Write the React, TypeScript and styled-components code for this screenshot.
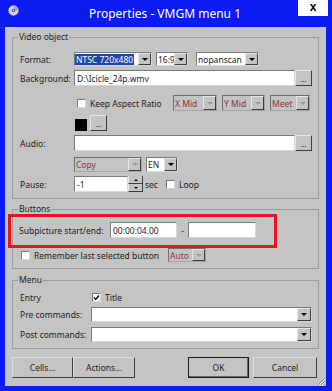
import * as React from 'react';
import styled, { createGlobalStyle, css } from 'styled-components';

const GlobalStyle = createGlobalStyle`
    html, body {
        margin: 0;
        padding: 0;
        background: #ffffff;
    }
    body {
        font-family: "Noto Sans", "DejaVu Sans", sans-serif;
        font-size: 8.5px;
        color: #1c1c1c;
    }
`;

const GREY = '#c4c4c4';

const Window = styled.div`
    width: 332px;
    height: 391px;
    box-sizing: border-box;
    background: #0a1cf2;
    display: flex;
    flex-direction: column;
    padding: 0 6px 5px 5px;
`;

const TitleBar = styled.div`
    height: 27px;
    margin: 0 -4px 0 -5px;
    display: grid;
    grid-template-columns: 1fr auto 1fr;
`;

const TitleIcon = styled.svg`
    margin: 5px 0 0 8px;
`;

const TitleText = styled.div`
    font-size: 12px;
    color: #ffffff;
    line-height: 27px;
`;

const CloseButton = styled.div`
    justify-self: end;
    width: 30px;
    height: 16px;
    margin-right: 2px;
    background: #ffffff;
    color: #000;
    font-family: "Liberation Sans", Arial, sans-serif;
    font-weight: 700;
    font-size: 12px;
    line-height: 14px;
    text-align: center;
`;

const Body = styled.div`
    position: relative;
    flex: 1;
    background: ${GREY};
    padding: 4px 7px 0 7px;
`;

const Group = styled.fieldset<{ $mt?: number; $pt: number }>`
    margin: ${p => p.$mt || 0}px 0 0 0;
    padding: ${p => p.$pt}px 6px 6px 7px;
    border: 1px solid #9c9c9c;
    min-width: 0;
`;

const Legend = styled.legend`
    padding: 0 1px;
    margin-left: -2px;
    line-height: 12px;
`;

const Row = styled.div<{ $mt?: number; $h: number; $cols?: string }>`
    display: grid;
    grid-template-columns: ${p => p.$cols || '54px 1fr'};
    align-items: center;
    height: ${p => p.$h}px;
    margin-top: ${p => p.$mt || 0}px;
`;

const Controls = styled.div<{ $gap?: number }>`
    display: flex;
    align-items: center;
    height: 100%;
    gap: ${p => p.$gap || 0}px;
`;

const Label = styled.span`
    white-space: nowrap;
`;

const sunken = css`
    box-sizing: border-box;
    border: 1px solid #d8d8d8;
    border-top-color: #7a7a7a;
    border-left-color: #7a7a7a;
`;

const TextBox = styled.div<{ $w?: number; $grow?: boolean }>`
    ${sunken};
    height: 100%;
    width: ${p => (p.$w ? `${p.$w}px` : 'auto')};
    flex: ${p => (p.$grow ? 1 : 'none')};
    background: #ffffff;
    padding-left: 2px;
    display: flex;
    align-items: center;
    white-space: nowrap;
`;

const SmallButton = styled.div<{ $w: number }>`
    box-sizing: border-box;
    width: ${p => p.$w}px;
    height: 100%;
    border-right: 1px solid #3c3c3c;
    border-bottom: 1px solid #3c3c3c;
    border-top: 1px solid #e6e6e6;
    border-left: 1px solid #e6e6e6;
    display: flex;
    align-items: center;
    justify-content: center;
    font-size: 7px;
    line-height: 1;
    padding-top: 2px;
`;

const SelectBox = styled.div<{ $w: number; $disabled?: boolean }>`
    ${sunken};
    width: ${p => p.$w}px;
    height: 100%;
    display: flex;
    background: ${p => (p.$disabled ? GREY : '#ffffff')};
    ${p => p.$disabled && css`
        border-color: #a6a6a6;
        border-top-color: #6e6e6e;
        border-left-color: #6e6e6e;
    `}
`;

const SelectText = styled.div<{ $disabled?: boolean; $selected?: boolean }>`
    flex: 1;
    display: flex;
    align-items: center;
    white-space: nowrap;
    overflow: hidden;
    color: ${p => (p.$disabled ? '#8a3434' : '#1c1c1c')};
    span {
        padding: 0 1px;
        ${p => p.$selected && css`
            background: #1f45b0;
            color: #ffffff;
        `}
    }
`;

const ArrowButton = styled.div<{ $disabled?: boolean; $w?: number }>`
    box-sizing: border-box;
    width: ${p => p.$w || 13}px;
    background: ${GREY};
    border-right: 1px solid #3c3c3c;
    border-bottom: 1px solid #3c3c3c;
    border-left: 1px solid #e6e6e6;
    border-top: 1px solid #e6e6e6;
    display: flex;
    align-items: center;
    justify-content: center;
    &::after {
        content: '';
        border-left: 3px solid transparent;
        border-right: 3px solid transparent;
        border-top: 3px solid ${p => (p.$disabled ? '#9a9a9a' : '#000000')};
    }
`;

const CheckBox = styled.div<{ $checked?: boolean; $ml?: number }>`
    ${sunken};
    width: 9px;
    height: 9px;
    margin-left: ${p => p.$ml || 0}px;
    background: #ffffff;
    display: flex;
    align-items: center;
    justify-content: center;
`;

const Swatch = styled.div`
    width: 12px;
    height: 12px;
    background: #000000;
    margin: 4px 3px 0 1px;
`;

const SpinButtons = styled.div`
    display: flex;
    flex-direction: column;
    width: 15px;
    height: 100%;
`;

const SpinHalf = styled.div<{ $up?: boolean }>`
    flex: 1;
    box-sizing: border-box;
    border-right: 1px solid #3c3c3c;
    border-bottom: 1px solid #3c3c3c;
    border-left: 1px solid #e6e6e6;
    display: flex;
    align-items: center;
    justify-content: center;
    &::after {
        content: '';
        border-left: 2px solid transparent;
        border-right: 2px solid transparent;
        ${p => (p.$up ? 'border-bottom: 2px solid #000;' : 'border-top: 2px solid #000;')}
    }
`;

const Highlight = styled.div`
    position: relative;
    &::after {
        content: '';
        position: absolute;
        left: -12px;
        top: -8px;
        width: 269px;
        bottom: -10px;
        border: 3px solid #e8141c;
        box-sizing: border-box;
        pointer-events: none;
    }
`;

const ButtonBar = styled.div`
    display: flex;
    height: 21px;
    margin-top: 8px;
    padding-right: 2px;
`;

const PushButton = styled.div<{ $w: number; $default?: boolean; $ml?: number }>`
    box-sizing: border-box;
    width: ${p => p.$w}px;
    margin-left: ${p => p.$ml || 0}px;
    height: 100%;
    display: flex;
    align-items: center;
    justify-content: center;
    border-right: 1px solid #3c3c3c;
    border-bottom: 1px solid #3c3c3c;
    border-top: 1px solid #dcdcdc;
    border-left: 1px solid #dcdcdc;
    ${p => p.$default && css`
        border: 1px solid #1a1a1a;
        box-shadow: inset -1px -1px 0 #6a6a6a;
    `}
`;

const Spacer = styled.div`
    flex: 1;
`;

const Grip = styled.svg`
    position: absolute;
    right: 0;
    bottom: 0;
`;

function Select(props: { w: number; text: string; disabled?: boolean; selected?: boolean }) {
    return (
        <SelectBox $w={props.w} $disabled={props.disabled}>
            <SelectText $disabled={props.disabled} $selected={props.selected}>
                <span>{props.text}</span>
            </SelectText>
            <ArrowButton $disabled={props.disabled} />
        </SelectBox>
    );
}

function Check(props: { checked?: boolean; ml?: number }) {
    return (
        <CheckBox $checked={props.checked} $ml={props.ml}>
            {props.checked && (
                <svg width="7" height="7" viewBox="0 0 7 7">
                    <path d="M1 3.5 L2.8 5.3 L6 1.5" stroke="#000" strokeWidth="1.4" fill="none" />
                </svg>
            )}
        </CheckBox>
    );
}

export default function App() {
    return (
        <>
            <GlobalStyle />
            <Window>
                <TitleBar>
                    <TitleIcon width="11" height="11" viewBox="0 0 11 11">
                        <circle cx="5.5" cy="5.5" r="5" fill="#d8d8e8" />
                        <circle cx="5.5" cy="5.5" r="5" fill="none" stroke="#8888a8" strokeWidth="0.6" />
                        <path d="M5.5 0.5 A5 5 0 0 1 10.5 5.5 L5.5 5.5 Z" fill="#b0a0d8" />
                        <circle cx="5.5" cy="5.5" r="1.8" fill="#7040a0" />
                        <circle cx="5.5" cy="5.5" r="0.7" fill="#ffffff" />
                    </TitleIcon>
                    <TitleText>Properties - VMGM menu 1</TitleText>
                    <CloseButton>x</CloseButton>
                </TitleBar>
                <Body>
                    <Group $pt={9}>
                        <Legend>Video object</Legend>
                        <Row $h={14}>
                            <Label>Format:</Label>
                            <Controls>
                                <Select w={78} text="NTSC 720x480" selected={true} />
                                <span style={{ width: 4 }} />
                                <Select w={32} text="16:9" />
                                <span style={{ width: 8 }} />
                                <Select w={63} text="nopanscan" />
                            </Controls>
                        </Row>
                        <Row $h={16} $mt={4}>
                            <Label>Background:</Label>
                            <Controls>
                                <TextBox $grow={true}>D:\Icicle_24p.wmv</TextBox>
                                <SmallButton $w={17}>...</SmallButton>
                            </Controls>
                        </Row>
                        <Row $h={16} $mt={9}>
                            <span />
                            <Controls>
                                <Check ml={3} />
                                <Label style={{ marginLeft: 4, width: 83 }}>Keep Aspect Ratio</Label>
                                <Select w={44} text="X Mid" disabled={true} />
                                <span style={{ width: 5 }} />
                                <Select w={43} text="Y Mid" disabled={true} />
                                <span style={{ width: 5 }} />
                                <Select w={40} text="Meet" disabled={true} />
                            </Controls>
                        </Row>
                        <Row $h={16} $mt={4}>
                            <span />
                            <Controls>
                                <Swatch />
                                <SmallButton $w={17}>...</SmallButton>
                            </Controls>
                        </Row>
                        <Row $h={16} $mt={4}>
                            <Label>Audio:</Label>
                            <Controls>
                                <TextBox $grow={true} />
                                <SmallButton $w={17}>...</SmallButton>
                            </Controls>
                        </Row>
                        <Row $h={15} $mt={6}>
                            <span />
                            <Controls>
                                <Select w={68} text="Copy" disabled={true} />
                                <span style={{ width: 4 }} />
                                <Select w={32} text="EN" />
                            </Controls>
                        </Row>
                        <Row $h={16} $mt={4}>
                            <Label>Pause:</Label>
                            <Controls>
                                <TextBox $w={54}>-1</TextBox>
                                <SpinButtons>
                                    <SpinHalf $up={true} />
                                    <SpinHalf />
                                </SpinButtons>
                                <Label style={{ marginLeft: 2, width: 21 }}>sec</Label>
                                <Check />
                                <Label style={{ marginLeft: 4 }}>Loop</Label>
                            </Controls>
                        </Row>
                    </Group>

                    <Group $mt={4} $pt={7}>
                        <Legend>Buttons</Legend>
                        <Highlight>
                            <Row $h={16} $cols="90px 1fr">
                                <Label style={{ marginLeft: -1 }}>Subpicture start/end:</Label>
                                <Controls>
                                    <TextBox $w={67}>00:00:04.00</TextBox>
                                    <Label style={{ width: 11, textAlign: 'center' }}>-</Label>
                                    <TextBox $w={68} />
                                </Controls>
                            </Row>
                        </Highlight>
                        <Row $h={14} $mt={10} $cols="1fr">
                            <Controls>
                                <Check ml={1} />
                                <Label style={{ marginLeft: 4, width: 134 }}>Remember last selected button</Label>
                                <Select w={38} text="Auto" disabled={true} />
                            </Controls>
                        </Row>
                    </Group>

                    <Group $mt={5} $pt={5}>
                        <Legend>Menu</Legend>
                        <Row $h={12} $cols="71px 1fr">
                            <Label>Entry</Label>
                            <Controls>
                                <Check checked={true} ml={1} />
                                <Label style={{ marginLeft: 4 }}>Title</Label>
                            </Controls>
                        </Row>
                        <Row $h={15} $mt={4} $cols="71px 1fr">
                            <Label>Pre commands:</Label>
                            <Controls>
                                <SelectBox $w={221}>
                                    <SelectText />
                                    <ArrowButton $w={14} />
                                </SelectBox>
                            </Controls>
                        </Row>
                        <Row $h={15} $mt={5} $cols="71px 1fr">
                            <Label>Post commands:</Label>
                            <Controls>
                                <SelectBox $w={221}>
                                    <SelectText />
                                    <ArrowButton $w={14} />
                                </SelectBox>
                            </Controls>
                        </Row>
                    </Group>

                    <ButtonBar>
                        <PushButton $w={61}>Cells...</PushButton>
                        <PushButton $w={62}>Actions...</PushButton>
                        <Spacer />
                        <PushButton $w={61} $default={true}>OK</PushButton>
                        <PushButton $w={64} $ml={4}>Cancel</PushButton>
                    </ButtonBar>
                    <Grip width="10" height="10" viewBox="0 0 10 10">
                        <path d="M9 2 L2 9 M9 5 L5 9 M9 8 L8 9" stroke="#8a8a8a" strokeWidth="1" />
                        <path d="M9 3 L3 9 M9 6 L6 9" stroke="#f4f4f4" strokeWidth="1" />
                    </Grip>
                </Body>
            </Window>
        </>
    );
}
